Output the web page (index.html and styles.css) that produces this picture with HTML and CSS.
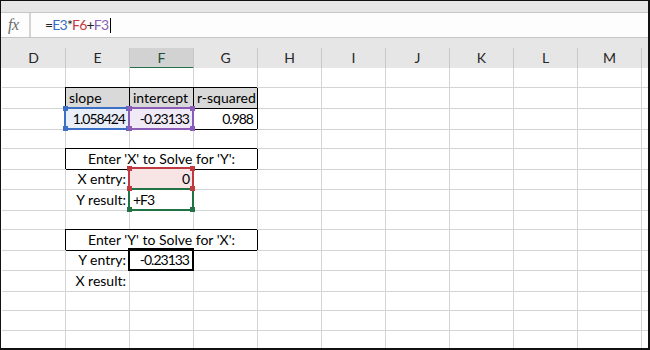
FILE: index.html
```html
<!DOCTYPE html>
<html lang="en">
<head>
  <meta charset="UTF-8" />
  <title>Regression solver</title>
  <link rel="stylesheet" href="styles.css">
</head>
<body>
  <div class="app">
    <div class="ribbon-edge"></div>

    <div class="formula-bar">
      <div class="fx">fx</div>
      <div class="formula">=<span class="r-blue">E3</span>*<span class="r-red">F6</span>+<span class="r-purple">F3</span><span class="caret"></span></div>
    </div>

    <div class="bar-gap"></div>

    <div class="col-heads">
      <div class="ch">D</div>
      <div class="ch">E</div>
      <div class="ch on">F</div>
      <div class="ch">G</div>
      <div class="ch">H</div>
      <div class="ch">I</div>
      <div class="ch">J</div>
      <div class="ch">K</div>
      <div class="ch">L</div>
      <div class="ch">M</div>
      <div class="ch"></div>
    </div>

    <div class="sheet">
      <div class="row"><div class="c"></div><div class="c"></div><div class="c"></div><div class="c"></div><div class="c"></div><div class="c"></div><div class="c"></div><div class="c"></div><div class="c"></div><div class="c"></div><div class="c"></div></div>

      <div class="row">
        <div class="c"></div>
        <div class="c bx hd">slope</div>
        <div class="c bx hd">intercept</div>
        <div class="c bx hd">r-squared</div>
        <div class="c"></div><div class="c"></div><div class="c"></div><div class="c"></div><div class="c"></div><div class="c"></div><div class="c"></div>
      </div>

      <div class="row">
        <div class="c"></div>
        <div class="c bx num val sel sel-blue">1.058424</div>
        <div class="c bx num val sel sel-purple">-0.23133</div>
        <div class="c bx num val">0.988</div>
        <div class="c"></div><div class="c"></div><div class="c"></div><div class="c"></div><div class="c"></div><div class="c"></div><div class="c"></div>
      </div>

      <div class="row"><div class="c"></div><div class="c"></div><div class="c"></div><div class="c"></div><div class="c"></div><div class="c"></div><div class="c"></div><div class="c"></div><div class="c"></div><div class="c"></div><div class="c"></div></div>

      <div class="row">
        <div class="c"></div>
        <div class="c bx merged">Enter 'X' to Solve for 'Y':</div>
        <div class="c"></div><div class="c"></div><div class="c"></div><div class="c"></div><div class="c"></div><div class="c"></div><div class="c"></div>
      </div>

      <div class="row">
        <div class="c"></div>
        <div class="c num">X entry:</div>
        <div class="c num val sel sel-red">0</div>
        <div class="c"></div>
        <div class="c"></div><div class="c"></div><div class="c"></div><div class="c"></div><div class="c"></div><div class="c"></div><div class="c"></div>
      </div>

      <div class="row">
        <div class="c"></div>
        <div class="c num">Y result:</div>
        <div class="c val sel sel-green">+F3</div>
        <div class="c"></div>
        <div class="c"></div><div class="c"></div><div class="c"></div><div class="c"></div><div class="c"></div><div class="c"></div><div class="c"></div>
      </div>

      <div class="row"><div class="c"></div><div class="c"></div><div class="c"></div><div class="c"></div><div class="c"></div><div class="c"></div><div class="c"></div><div class="c"></div><div class="c"></div><div class="c"></div><div class="c"></div></div>

      <div class="row">
        <div class="c"></div>
        <div class="c bx merged">Enter 'Y' to Solve for 'X':</div>
        <div class="c"></div><div class="c"></div><div class="c"></div><div class="c"></div><div class="c"></div><div class="c"></div><div class="c"></div>
      </div>

      <div class="row">
        <div class="c"></div>
        <div class="c num">Y entry:</div>
        <div class="c num val sel sel-black">-0.23133</div>
        <div class="c"></div>
        <div class="c"></div><div class="c"></div><div class="c"></div><div class="c"></div><div class="c"></div><div class="c"></div><div class="c"></div>
      </div>

      <div class="row">
        <div class="c"></div>
        <div class="c num">X result:</div>
        <div class="c"></div>
        <div class="c"></div>
        <div class="c"></div><div class="c"></div><div class="c"></div><div class="c"></div><div class="c"></div><div class="c"></div><div class="c"></div>
      </div>

      <div class="row"><div class="c"></div><div class="c"></div><div class="c"></div><div class="c"></div><div class="c"></div><div class="c"></div><div class="c"></div><div class="c"></div><div class="c"></div><div class="c"></div><div class="c"></div></div>
      <div class="row"><div class="c"></div><div class="c"></div><div class="c"></div><div class="c"></div><div class="c"></div><div class="c"></div><div class="c"></div><div class="c"></div><div class="c"></div><div class="c"></div><div class="c"></div></div>
      <div class="row"><div class="c"></div><div class="c"></div><div class="c"></div><div class="c"></div><div class="c"></div><div class="c"></div><div class="c"></div><div class="c"></div><div class="c"></div><div class="c"></div><div class="c"></div></div>
    </div>
  </div>
</body>
</html>
```

FILE: styles.css
```css
* {
  box-sizing: border-box;
}
body {
  margin: 0;
  font-family: Lato, "Liberation Sans", sans-serif;
  color: #000;
  background: #fff;
}
.app {
  width: 650px;
  height: 350px;
  border: 1px solid #111;
  border-right-width: 2px;
  border-bottom-width: 2px;
  background: #e6e6e6;
  overflow: hidden;
  display: flex;
  flex-direction: column;
}
.ribbon-edge {
  height: 11px;
  flex: none;
}
.formula-bar {
  height: 26px;
  flex: none;
  display: flex;
  background: #fdfdfd;
  border-top: 1px solid #c6c6c6;
  border-bottom: 1px solid #c6c6c6;
}
.fx {
  width: 30px;
  border-right: 2px solid #d4d4d4;
  padding-left: 7px;
  font-family: "Liberation Serif", serif;
  font-style: italic;
  font-size: 16px;
  line-height: 23px;
  color: #6a6a6a;
  letter-spacing: -0.5px;
}
.formula {
  flex: 1;
  padding-left: 14px;
  font-size: 14px;
  line-height: 24px;
  letter-spacing: -0.8px;
  color: #222;
  display: flex;
  align-items: center;
}
.r-blue { color: #3b6ec6; }
.r-red { color: #c5393c; }
.r-purple { color: #8c5db9; }
.caret {
  width: 1px;
  height: 15px;
  margin-left: 2px;
  background: #000;
}
.bar-gap {
  height: 10px;
  flex: none;
}
.col-heads {
  height: 20px;
  flex: none;
  display: grid;
  grid-template-columns: repeat(11, 64px);
  padding-left: 1px;
}
.ch {
  border-right: 1px solid #c8c8c8;
  border-bottom: 1px solid #a6a6a6;
  text-align: center;
  font-size: 14px;
  line-height: 19px;
  color: #262626;
}
.ch.on {
  background: #d2d2d2;
  border-bottom: 2px solid #217346;
  color: #1f4e36;
}
.sheet {
  flex: 1;
  background: #fff;
  padding-left: 1px;
}
.row {
  height: 20.28px;
  display: grid;
  grid-template-columns: repeat(11, 64px);
}
.c {
  border-right: 1px solid #d4d4d4;
  border-bottom: 1px solid #d4d4d4;
  padding: 0 3px;
  font-size: 14px;
  line-height: 20px;
  white-space: nowrap;
}
.num {
  text-align: right;
}
.val {
  letter-spacing: -1px;
}
.val.num {
  padding-right: 4px;
}
.bx {
  border-color: #000;
  box-shadow: -1px -1px 0 #000;
}
.hd {
  background: #d9d9d9;
}
.merged {
  grid-column: span 3;
  text-align: center;
}
.sel {
  position: relative;
}
.sel::after {
  content: "";
  position: absolute;
  top: -2px;
  left: -2px;
  right: -1px;
  bottom: -1px;
  border: 2px solid var(--sel);
}
.sel::before {
  content: "";
  position: absolute;
  top: -3px;
  left: -3px;
  right: -2px;
  bottom: -2px;
  z-index: 1;
  background:
    linear-gradient(var(--sel), var(--sel)) left top / 5px 5px no-repeat,
    linear-gradient(var(--sel), var(--sel)) right top / 5px 5px no-repeat,
    linear-gradient(var(--sel), var(--sel)) left bottom / 5px 5px no-repeat,
    linear-gradient(var(--sel), var(--sel)) right bottom / 5px 5px no-repeat;
}
.sel-blue {
  --sel: #3c6fc6;
  background: #e9eef8;
}
.sel-purple {
  --sel: #8a5cb8;
  background: #efeaf5;
}
.sel-red {
  --sel: #c0393f;
  background: #f7e4e4;
}
.sel-green {
  --sel: #217346;
}
.sel-green::before {
  background:
    linear-gradient(var(--sel), var(--sel)) left bottom / 5px 5px no-repeat,
    linear-gradient(var(--sel), var(--sel)) right bottom / 5px 5px no-repeat;
}
.sel-black {
  --sel: #000;
}
.sel-black::before {
  display: none;
}
```
